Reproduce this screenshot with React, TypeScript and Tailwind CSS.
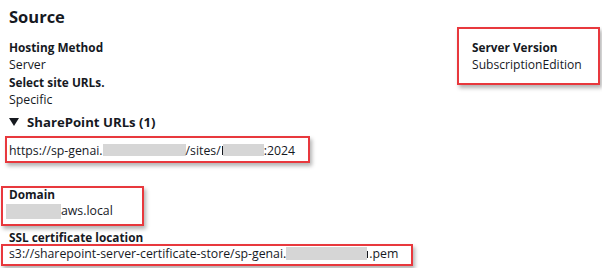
import React from "react";

const font = { fontFamily: '"Open Sans", "Noto Sans", sans-serif' };

function Redact({ w, h }: { w: number; h: number }) {
  return (
    <span
      className="inline-block bg-[#d6d6d6] align-middle"
      style={{ width: w, height: h }}
    />
  );
}

export default function App() {
  return (
    <div
      className="w-[602px] h-[268px] bg-white text-[#16191f] overflow-hidden"
      style={font}
    >
      <div className="flex">
        <div className="flex-1 pl-[9px]">
          <h2 className="pt-[5px] text-[16.5px] leading-[23px] font-bold">Source</h2>
          <div className="mt-[10.75px] text-[12.3px] leading-[17.5px]">
            <div className="font-bold text-[11.8px]">Hosting Method</div>
            <div>Server</div>
            <div className="font-bold text-[11.8px]">Select site URLs.</div>
            <div>Specific</div>
          </div>
          <div className="mt-[3.25px] flex items-center h-[20px] gap-[8px]">
            <svg width="10" height="8" viewBox="0 0 10 8" className="shrink-0">
              <polygon points="0,0 10,0 5,8" fill="#16191f" />
            </svg>
            <span className="text-[13.2px] font-bold leading-[20px]">SharePoint URLs (1)</span>
          </div>
        </div>
        <div className="mt-[27px] mr-[2px] w-[143px] h-[58px] border-2 border-[#e8383d] shadow-[2px_3px_4px_rgba(0,0,0,0.3)] pl-[13px] pt-[9.75px] text-[12.1px] leading-[17.5px]">
          <div className="font-bold text-[11.8px]">Server Version</div>
          <div>SubscriptionEdition</div>
        </div>
      </div>

      <div className="mt-[4px] ml-[5px] w-[305px] h-[27px] border-2 border-[#e8383d] shadow-[2px_3px_4px_rgba(0,0,0,0.3)] pl-[2px] pt-[1px] text-[12.3px] leading-[23px] whitespace-nowrap flex items-center">
        <span>https://sp-genai.</span>
        <Redact w={83} h={12} />
        <span>/sites/</span>
        <span className="inline-block w-[1px] h-[9px] bg-[#16191f] ml-[1px] mt-[1px]" />
        <Redact w={41} h={12} />
        <span>:2024</span>
      </div>

      <div className="mt-[23px] ml-[1px] w-[143px] h-[40px] border-2 border-[#e8383d] shadow-[2px_3px_4px_rgba(0,0,0,0.3)] text-[12.3px]">
        <div className="pl-[6px] font-bold text-[11.8px] leading-[12px]">Domain</div>
        <div className="pl-[3px] leading-[22px] flex items-center">
          <Redact w={55} h={15} />
          <span>aws.local</span>
        </div>
      </div>

      <div className="mt-[4px] pl-[9px] text-[11.8px] font-bold leading-[14px]">
        SSL certificate location
      </div>
      <div className="ml-[1px] w-[412px] h-[22px] border-2 border-[#e8383d] shadow-[2px_3px_4px_rgba(0,0,0,0.3)] pl-[6px] text-[12.3px] leading-[15px] whitespace-nowrap flex items-center pb-[3px]">
        <span>s3://sharepoint-server-certificate-store/sp-genai.</span>
        <Redact w={81} h={13} />
        <span className="inline-block w-[1px] h-[7px] bg-[#16191f] mt-[2px] mr-[1px]" />
        <span>.pem</span>
      </div>
    </div>
  );
}
